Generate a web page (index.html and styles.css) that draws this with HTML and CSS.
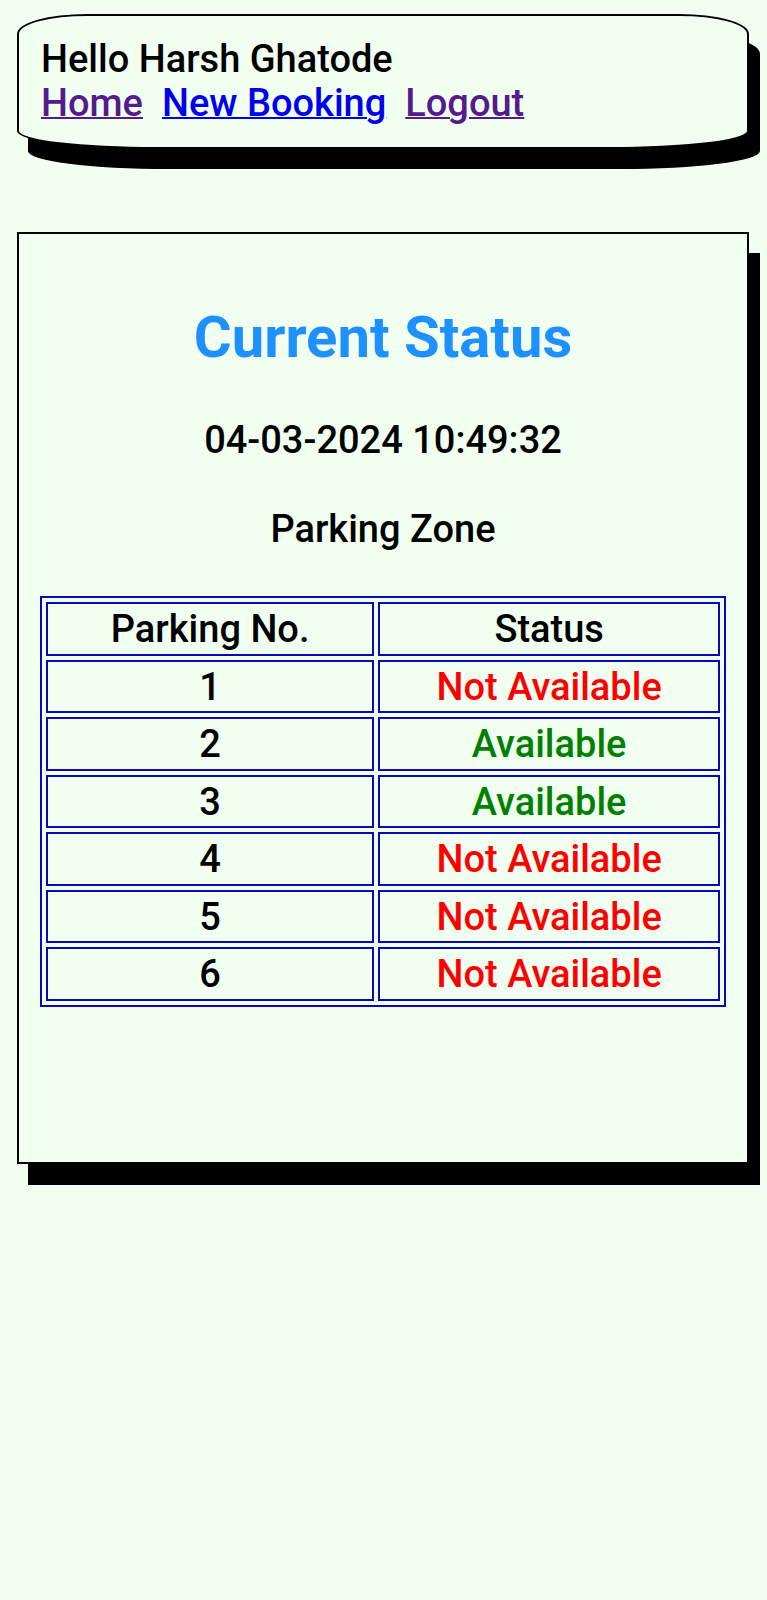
FILE: index.html
```html
<!DOCTYPE html>
<html lang="en">
<head>
  <meta charset="UTF-8">
  <meta name="viewport" content="width=device-width, initial-scale=1.0">
  <title>Current Status</title>
  <link rel="stylesheet" href="styles.css">
</head>
<body>
  <!-- Header -->
  <header class="topbar">
    <div class="greet">Hello Harsh Ghatode</div>
    <nav class="links">
      <a href="#" class="visited">Home</a>
      <a href="#">New Booking</a>
      <a href="#" class="visited">Logout</a>
    </nav>
  </header>

  <!-- Status card -->
  <main class="card">
    <h1 class="title">Current Status</h1>
    <p class="stamp">04-03-2024 10:49:32</p>
    <p class="zone">Parking Zone</p>

    <table class="slots">
      <tr>
        <th class="col-no">Parking No.</th>
        <th>Status</th>
      </tr>
      <tr><td>1</td><td class="taken">Not Available</td></tr>
      <tr><td>2</td><td class="free">Available</td></tr>
      <tr><td>3</td><td class="free">Available</td></tr>
      <tr><td>4</td><td class="taken">Not Available</td></tr>
      <tr><td>5</td><td class="taken">Not Available</td></tr>
      <tr><td>6</td><td class="taken">Not Available</td></tr>
    </table>
  </main>
</body>
</html>
```

FILE: styles.css
```css
* {
  box-sizing: border-box;
}
body {
  margin: 0;
  padding: 14px 18px 60px 17px;
  min-height: 1600px;
  background: #f0fff0;
  font-family: Roboto, "Noto Sans", Arial, sans-serif;
  font-size: 38px;
  font-weight: 500;
  color: #000;
}

/* Header */
.topbar {
  background: #f0fff0;
  border: 2px solid #000;
  border-radius: 70px 70px 140px 140px / 20px 20px 18px 18px;
  box-shadow: 11px 20px 0 #000;
  padding: 21px 22px 22px;
}
.links {
  display: flex;
  gap: 19px;
}
.links a {
  color: #0000ee;
  text-decoration-thickness: 2px;
}
.links a.visited {
  color: #551a8b;
}

/* Card */
.card {
  display: block;
  margin-top: 83px;
  height: 932px;
  border: 2px solid #000;
  box-shadow: 11px 21px 0 #000;
  padding: 21px;
  text-align: center;
}
.title {
  margin: 48px 0 47px;
  font-size: 58px;
  font-weight: bold;
  color: #1e90ff;
}
.stamp,
.zone {
  margin: 0 0 45px;
}

/* Table */
.slots {
  width: 100%;
  border: 2px solid #0808b8;
  border-spacing: 4px;
}
.slots th,
.slots td {
  border: 2px solid #0808b8;
  padding: 3px 2px 2.5px;
  font-weight: 500;
  text-align: center;
}
.col-no {
  width: 49%;
}
.taken {
  color: #f00;
}
.free {
  color: #008000;
}
```
